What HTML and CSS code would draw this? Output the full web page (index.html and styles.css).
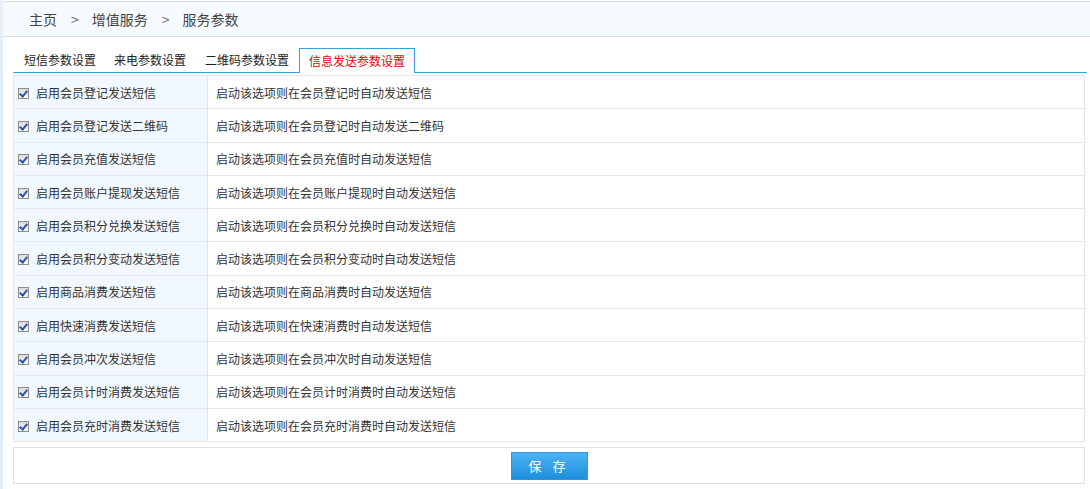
FILE: index.html
```html
<!DOCTYPE html>
<html lang="zh-CN">
<head>
    <meta charset="UTF-8">
    <title>服务参数</title>
    <link rel="stylesheet" href="styles.css">
</head>
<body>
<div class="page">
    <div class="crumbs">
        <span>主页</span><span class="sep">&gt;</span><span>增值服务</span><span class="sep">&gt;</span><span>服务参数</span>
    </div>

    <div class="tabs">
        <a class="tab">短信参数设置</a>
        <a class="tab">来电参数设置</a>
        <a class="tab wide">二维码参数设置</a>
        <a class="tab active">信息发送参数设置</a>
    </div>

    <table class="opts">
        <tr><td class="name"><span class="chk"></span>启用会员登记发送短信</td><td>启动该选项则在会员登记时自动发送短信</td></tr>
        <tr><td class="name"><span class="chk"></span>启用会员登记发送二维码</td><td>启动该选项则在会员登记时自动发送二维码</td></tr>
        <tr><td class="name"><span class="chk"></span>启用会员充值发送短信</td><td>启动该选项则在会员充值时自动发送短信</td></tr>
        <tr><td class="name"><span class="chk"></span>启用会员账户提现发送短信</td><td>启动该选项则在会员账户提现时自动发送短信</td></tr>
        <tr><td class="name"><span class="chk"></span>启用会员积分兑换发送短信</td><td>启动该选项则在会员积分兑换时自动发送短信</td></tr>
        <tr><td class="name"><span class="chk"></span>启用会员积分变动发送短信</td><td>启动该选项则在会员积分变动时自动发送短信</td></tr>
        <tr><td class="name"><span class="chk"></span>启用商品消费发送短信</td><td>启动该选项则在商品消费时自动发送短信</td></tr>
        <tr><td class="name"><span class="chk"></span>启用快速消费发送短信</td><td>启动该选项则在快速消费时自动发送短信</td></tr>
        <tr><td class="name"><span class="chk"></span>启用会员冲次发送短信</td><td>启动该选项则在会员冲次时自动发送短信</td></tr>
        <tr><td class="name"><span class="chk"></span>启用会员计时消费发送短信</td><td>启动该选项则在会员计时消费时自动发送短信</td></tr>
        <tr><td class="name"><span class="chk"></span>启用会员充时消费发送短信</td><td>启动该选项则在会员充时消费时自动发送短信</td></tr>
    </table>

    <div class="actions">
        <button class="save">保 存</button>
    </div>
</div>
</body>
</html>
```

FILE: styles.css
```css
body {
    margin: 0;
    font-family: "Noto Sans CJK SC", "Liberation Sans", sans-serif;
    font-size: 12px;
    color: #333;
    background: #fff;
}
.page {
    border-left: 3px solid #e4eff9;
    height: 489px;
    box-sizing: border-box;
    padding-top: 1px;
}
.crumbs {
    height: 34px;
    line-height: 34px;
    background: #f5fbff;
    border-top: 1px solid #dadfe3;
    border-bottom: 1px solid #dadfe3;
    padding-left: 26px;
    font-size: 14px;
    color: #444;
}
.crumbs .sep {
    color: #666;
    margin: 0 13px 0 14px;
}
.tabs {
    display: flex;
    margin: 11px 3px 0 10px;
    border-bottom: 1px solid #3a9fe0;
    height: 24px;
}
.tab {
    padding: 0 9px;
    line-height: 24px;
    color: #222;
    white-space: nowrap;
}
.tab:first-child {
    margin-left: 2px;
}
.tab.wide {
    padding: 0 10px 0 10px;
}
.tab.active {
    background: #fff;
    border: 1px solid #3a9fe0;
    border-bottom: none;
    height: 24px;
    line-height: 23px;
    color: #e00;
}
.opts {
    margin: 2px 0 0 10px;
    width: 1072px;
    border-collapse: collapse;
    border: 1px solid #e1e1e1;
}
.opts td {
    height: 32.3px;
    padding: 0 0 0 8px;
    border: 1px solid #e6e6e6;
    white-space: nowrap;
}
.opts td.name {
    width: 189px;
    padding-left: 4px;
    background: #f1f8ff;
}
.chk {
    display: inline-block;
    width: 9px;
    height: 9px;
    border: 1px solid #8d8d8d;
    background: linear-gradient(#dcdcdc, #fbfbfb);
    vertical-align: -1px;
    margin-right: 7px;
    position: relative;
}
.chk::after {
    content: "";
    position: absolute;
    left: 2px;
    top: 0;
    width: 3px;
    height: 6px;
    border: solid #2f4fae;
    border-width: 0 2px 2px 0;
    transform: rotate(40deg);
}
.actions {
    margin: 5px 0 0 10px;
    width: 1070px;
    height: 35px;
    border: 1px solid #e1e1e1;
    display: flex;
    justify-content: center;
    align-items: center;
}
.save {
    width: 77px;
    height: 28px;
    border: 1px solid #3796d8;
    background: linear-gradient(#4db3f5, #1d8fdb);
    color: #fff;
    font-family: inherit;
    font-size: 13px;
    letter-spacing: 4px;
    padding-left: 6px;
    cursor: pointer;
}
```
